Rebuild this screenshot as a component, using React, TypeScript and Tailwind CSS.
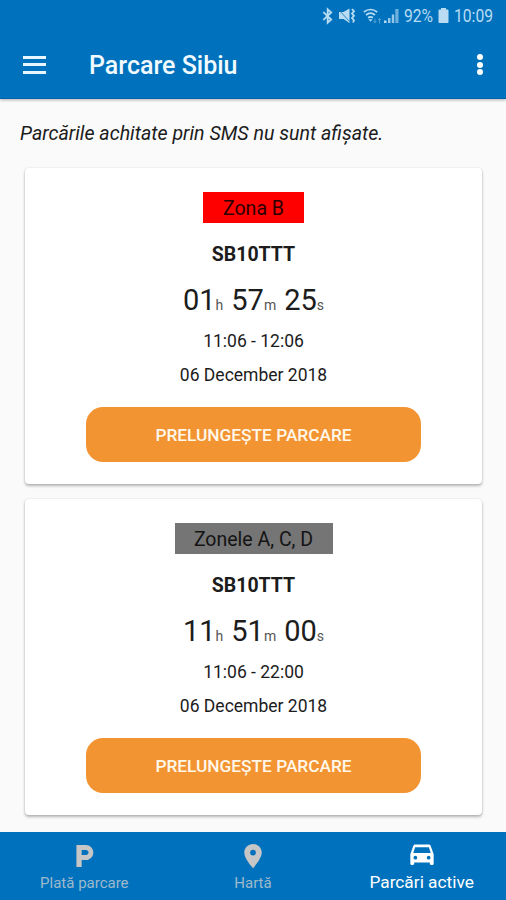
import type { ReactNode } from "react";

type Parking = {
  zone: string;
  badge: string;
  plate: string;
  time: [string, string, string];
  range: string;
  date: string;
};

const parkings: Parking[] = [
  {
    zone: "Zona B",
    badge: "w-[101px] bg-[#fe0000] text-[#2a0000]",
    plate: "SB10TTT",
    time: ["01", "57", "25"],
    range: "11:06 - 12:06",
    date: "06 December 2018",
  },
  {
    zone: "Zonele A, C, D",
    badge: "w-[158px] bg-[#757575] text-[#141414]",
    plate: "SB10TTT",
    time: ["11", "51", "00"],
    range: "11:06 - 22:00",
    date: "06 December 2018",
  },
];

function StatusBar() {
  return (
    <div className="flex h-8 items-center pl-[322px] text-[#b9dcf3]">
      <svg className="h-5 w-[11px] shrink-0" viewBox="0 0 12 20" fill="none" stroke="currentColor" strokeWidth="2">
        <path d="M1.500 5.800 10 13.800 6.200 17.200V2.800L10 6.200 1.500 14.200" />
      </svg>
      <svg className="ml-[6px] h-5 w-[18px] shrink-0" viewBox="0 0 18 20" fill="currentColor">
        <path d="M0 6h4.500L10.500 2.500v14.500L4.500 13H0z" />
        <path d="M0 4l10.500 11.500" stroke="#0072bd" strokeWidth="0.800" />
        <path d="M13 3l2 2.300-2 2.200 2 2.300-2 2.200 2 2.300-1 2.200" fill="none" stroke="currentColor" strokeWidth="1.800" />
      </svg>
      <svg className="ml-[6px] h-5 w-[19px] shrink-0" viewBox="0 0 19 20" fill="none" stroke="currentColor" strokeWidth="1.700">
        <path d="M.8 6q6.700-5 13.400 0M3 9q4.500-3.600 9 0M5 11.700q2.500-1.800 5 0" />
        <path d="M5.500 13.300h4l-2 2.400z" fill="currentColor" stroke="none" />
        <path d="M12 13v4M10.500 15l1.500 1.600 1.500-1.600M16.500 17.500v-5M15 14l1.500-1.600L18 14" stroke="#579fd2" strokeWidth="1" />
      </svg>
      <svg className="ml-[2px] h-5 w-[16px] shrink-0" viewBox="0 0 16 20" fill="currentColor">
        <path d="M0 14.500h2.500V17H0z" />
        <path d="M4 12h2.500v5H4zM7.800 8.500h2.400V17H7.800z" opacity=".8" />
        <path d="M11.300 3h3.200V17h-3.200z" opacity=".6" />
      </svg>
      <span className="ml-[4px] w-[30px] origin-left scale-x-[0.87] whitespace-nowrap text-[18px] leading-8">92%</span>
      <svg className="ml-[4px] h-5 w-[11px] shrink-0" viewBox="0 0 11 20" fill="currentColor">
        <path d="M3 2h5V3.500h1.500q1 0 1 1v11.500q0 1-1 1h-8q-1 0-1-1V4.500q0-1 1-1H3z" />
      </svg>
      <span className="ml-[5px] origin-left scale-x-[0.87] whitespace-nowrap text-[18px] leading-8">10:09</span>
    </div>
  );
}

function Unit({ value, unit }: { value: string; unit: string }) {
  return (
    <span>
      {value}
      <span className="text-[14px] text-[#555]">{unit}</span>
    </span>
  );
}

function Card({ p }: { p: Parking }) {
  return (
    <section className="flex h-[316px] flex-col items-center rounded-[4px] bg-white pt-6 text-[#1c1c1c] shadow-[0_2px_3px_rgba(0,0,0,0.27),0_0_2px_rgba(0,0,0,0.14)]">
      <div className={`flex h-[31px] items-center justify-center pt-[2px] text-[19.500px] ${p.badge}`}>{p.zone}</div>
      <div className="mt-5 h-6 text-[19.500px] leading-6 font-bold">{p.plate}</div>
      <div className="mt-[15px] flex h-9 gap-2 text-[29px] leading-9">
        <Unit value={p.time[0]} unit="h" />
        <Unit value={p.time[1]} unit="m" />
        <Unit value={p.time[2]} unit="s" />
      </div>
      <div className="mt-[11px] h-6 text-[17.500px] leading-6">{p.range}</div>
      <div className="mt-[10px] h-6 text-[17.500px] leading-6">{p.date}</div>
      <button className="mt-5 h-[55px] w-[335px] rounded-[17px] bg-[#f39433] pt-[3px] text-[17.300px] font-medium text-[#fff8ea]">
        PRELUNGEȘTE PARCARE
      </button>
    </section>
  );
}

function Tab({ label, className, children }: { label: string; className: string; children: ReactNode }) {
  return (
    <div className={`flex w-1/3 flex-col items-center pt-[10px] ${className}`}>
      <svg className="h-7 w-7" viewBox="0 0 24 24" fill="currentColor">
        {children}
      </svg>
      <span className="whitespace-nowrap">{label}</span>
    </div>
  );
}

export default function App() {
  return (
    <div className="flex h-[900px] w-[506px] flex-col overflow-hidden bg-[#fafafa] font-['Roboto',sans-serif]">
      <header className="h-[99px] shrink-0 border-b border-[#0065ab] bg-[#0072bd] shadow-[0_1px_3px_rgba(0,0,0,0.3)]">
        <StatusBar />
        <div className="flex h-[66px] items-center pr-[23px] pl-[23px] text-white">
          <div className="-mt-px flex w-[23px] flex-col gap-[4.500px]">
            <span className="h-[3px] bg-[#e8f6ff]" />
            <span className="h-[3px] bg-[#e8f6ff]" />
            <span className="h-[3px] bg-[#e8f6ff]" />
          </div>
          <h1 className="ml-[43px] pt-[2px] text-[25px] font-medium text-[#f1faff]">Parcare Sibiu</h1>
          <div className="-mt-px ml-auto flex flex-col gap-[1.500px]">
            <span className="size-[6px] rounded-full bg-white" />
            <span className="size-[6px] rounded-full bg-white" />
            <span className="size-[6px] rounded-full bg-white" />
          </div>
        </div>
      </header>
      <main className="flex-1 pr-6 pl-[25px]">
        <p className="-ml-[5px] h-[69px] pt-[23px] text-[19.600px] leading-6 text-[#1c1c1c] italic">
          Parcările achitate prin SMS nu sunt afișate.
        </p>
        <div className="flex flex-col gap-[15px]">
          {parkings.map((p) => (
            <Card key={p.zone} p={p} />
          ))}
        </div>
      </main>
      <nav className="flex h-[68px] shrink-0 bg-[#0072bd]">
        <Tab label="Plată parcare" className="text-[15px] leading-[26px] text-[#9fb9cc]">
          <path fill="#c6c6c6" d="M13.500 2.500H5.500v19h4.500v-6h3.500c3.600 0 6.500-2.900 6.500-6.500s-2.900-6.500-6.500-6.500zm.2 8.700H10V6.800h3.700c1.200 0 2.200 1 2.200 2.200s-1 2.200-2.200 2.200z" />
        </Tab>
        <Tab label="Hartă" className="text-[15px] leading-[26px] text-[#9fb9cc]">
          <path fill="#c6c6c6" d="M12 1.700c-4.100 0-7.500 3.300-7.500 7.400C4.500 14.600 12 22.500 12 22.500s7.500-7.900 7.500-13.400c0-4.100-3.400-7.400-7.500-7.400zm0 9.900a2.500 2.500 0 0 1 0-5 2.500 2.500 0 0 1 0 5z" />
        </Tab>
        <Tab label="Parcări active" className="text-[17.300px] leading-6 text-white">
          <path d="M19.500 3.500C19.300 2.700 18.700 2.200 18 2.200H6c-.7 0-1.300.5-1.500 1.300L2 10.500v8.200c0 .55.45 1 1 1h1.300c.55 0 1-.45 1-1v-1.200h13.400v1.200c0 .55.45 1 1 1H21c.55 0 1-.45 1-1v-8.200zM6.300 15a1.600 1.600 0 1 1 0-3.200 1.600 1.600 0 0 1 0 3.200zm11.400 0a1.600 1.600 0 1 1 0-3.200 1.600 1.600 0 0 1 0 3.200zM4.500 9.500l1.600-5h11.800l1.600 5z" />
        </Tab>
      </nav>
    </div>
  );
}
